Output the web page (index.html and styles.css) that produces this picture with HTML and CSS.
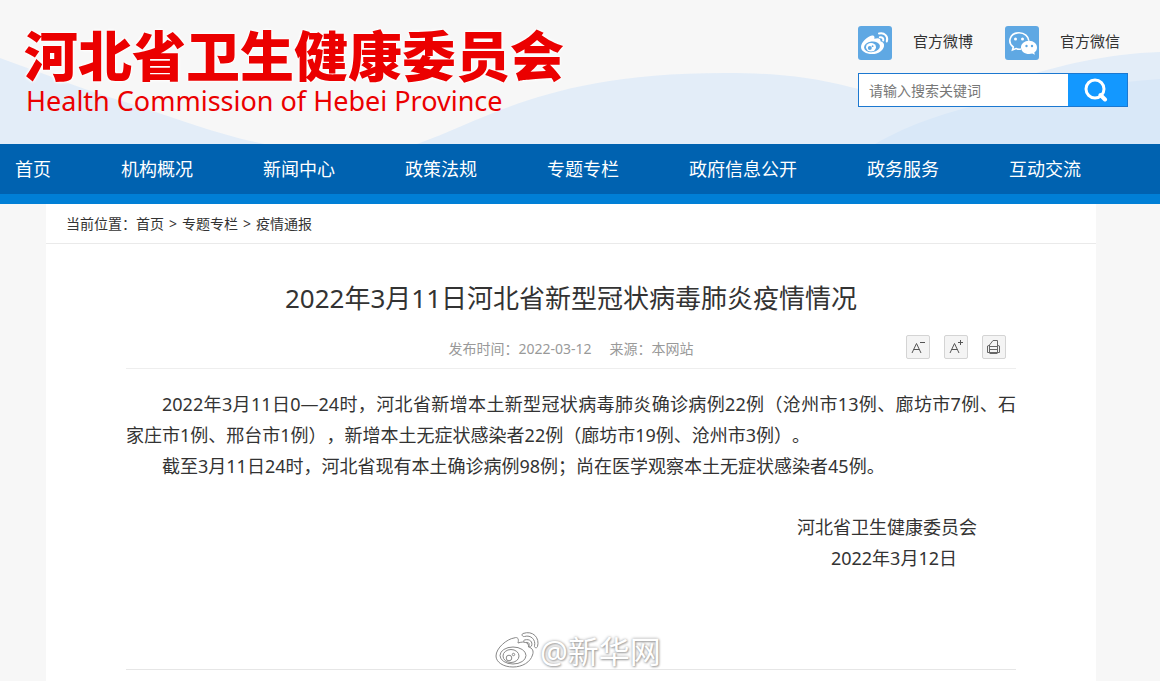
FILE: index.html
```html
<!DOCTYPE html>
<html lang="zh-CN">
<head>
  <meta charset="UTF-8">
  <meta name="viewport" content="width=device-width, initial-scale=1.0">
  <title>2022年3月11日河北省新型冠状病毒肺炎疫情情况</title>
  <link rel="stylesheet" href="styles.css">
</head>
<body>
  <header class="header">
    <svg class="waves" viewBox="0 0 1160 144" preserveAspectRatio="none" aria-hidden="true">
      <path fill="#e3edf8" d="M0 58C50 76 90 92 135 105C180 120 220 135 264 144H0Z"/>
      <path fill="#e3edf8" d="M417 144C490 118 550 73 725 73C800 73 830 82 870 92L1000 84C1050 68 1100 54 1160 52V144Z"/>
      <path fill="#d9e8f8" d="M875 144C930 112 1010 91 1160 79V144Z"/>
    </svg>
    <div class="logo">
      <div class="logo-cn">河北省卫生健康委员会</div>
      <div class="logo-en">Health Commission of Hebei Province</div>
    </div>
    <div class="tools">
      <div class="social">
        <a href="#">
          <svg width="34" height="34" viewBox="0 0 34 34" aria-hidden="true">
            <rect width="34" height="34" rx="3" fill="#5fa8e3"/>
            <path fill="#fff" d="M14 9.500c2-.5 3 .8 2.300 3.300 3.500-1.300 6.600-.8 6.200 2.400 2.600.8 4 2.300 3.500 5-.8 4-5.500 7.800-11.800 7.800C8 28 3 25.300 3 21c0-4.700 6.500-10.700 11-11.500Z"/>
            <ellipse cx="14" cy="20.800" rx="8" ry="5.300" fill="#5fa8e3" transform="rotate(-7 14 20.800)"/>
            <ellipse cx="13" cy="21.200" rx="5" ry="4.200" fill="#fff"/>
            <circle cx="11.800" cy="22" r="2" fill="#5fa8e3"/>
            <circle cx="14.600" cy="20.200" r=".9" fill="#5fa8e3"/>
            <path fill="none" stroke="#fff" stroke-width="2" stroke-linecap="round" d="M21 7.500c5.500-1.500 9.500 3 7.800 8M21.800 11.300c2.500-.5 4 1.200 3.400 3.300"/>
          </svg>
          <span>官方微博</span>
        </a>
        <a href="#">
          <svg width="34" height="34" viewBox="0 0 34 34" aria-hidden="true">
            <rect width="34" height="34" rx="3" fill="#5fa8e3"/>
            <path fill="none" stroke="#fff" stroke-width="1.600" d="M16 23c-1.500.3-3.500.2-5-.4L7.500 24l.8-3C2.500 17 4 7 14 6.800c5.500 0 9.500 3.700 9.800 8"/>
            <circle cx="10.500" cy="13" r="1.500" fill="#fff"/>
            <circle cx="17.500" cy="13" r="1.500" fill="#fff"/>
            <path fill="#fff" d="M24 14.800c4.700 0 8 3 8 6.700 0 2.200-1 3.900-2.700 5l.6 2.300-2.600-1.200c-6 1.600-11.300-1.600-11.300-6.100 0-3.700 3.500-6.700 8-6.700Z"/>
            <circle cx="21.500" cy="20" r="1.200" fill="#5fa8e3"/>
            <circle cx="27" cy="20" r="1.200" fill="#5fa8e3"/>
          </svg>
          <span>官方微信</span>
        </a>
      </div>
      <form class="search">
        <input type="text" placeholder="请输入搜索关键词" aria-label="请输入搜索关键词">
        <button type="button" aria-label="搜索">
          <svg width="24" height="24" viewBox="0 0 24 24" aria-hidden="true">
            <circle cx="11" cy="11" r="9" fill="none" stroke="#fff" stroke-width="3"/>
            <path d="M16.500 17L21 21.500" stroke="#fff" stroke-width="4" stroke-linecap="round"/>
          </svg>
        </button>
      </form>
    </div>
  </header>

  <nav class="nav">
    <a href="#">首页</a>
    <a href="#">机构概况</a>
    <a href="#">新闻中心</a>
    <a href="#">政策法规</a>
    <a href="#">专题专栏</a>
    <a href="#">政府信息公开</a>
    <a href="#">政务服务</a>
    <a href="#">互动交流</a>
  </nav>

  <main class="main">
    <div class="crumbs">当前位置：<a href="#">首页</a><span>&gt;</span><a href="#">专题专栏</a><span>&gt;</span><a href="#">疫情通报</a></div>
    <article class="article">
      <h1>2022年3月11日河北省新型冠状病毒肺炎疫情情况</h1>
      <div class="info">
        <div class="meta"><span>发布时间：2022-03-12</span><span>来源：本网站</span></div>
        <div class="actions">
          <button type="button" aria-label="缩小字号">
            <svg width="24" height="24" viewBox="0 0 24 24" fill="none" stroke="#555" aria-hidden="true">
              <path d="M6 18L10.500 8.500L15 18M7.500 14.500H13.500M14 7.500H19"/>
            </svg>
          </button>
          <button type="button" aria-label="放大字号">
            <svg width="24" height="24" viewBox="0 0 24 24" fill="none" stroke="#555" aria-hidden="true">
              <path d="M6 18L10.500 8.500L15 18M7.500 14.500H13.500M14 7.500H19M16.500 5V10"/>
            </svg>
          </button>
          <button type="button" aria-label="打印">
            <svg width="24" height="24" viewBox="0 0 24 24" fill="none" stroke="#666" aria-hidden="true">
              <path d="M7.500 17.500V10L11 5.500H15.500V17.500M7.500 11.500H15.500M7.500 14.500H15.500M7 10.500L5.500 11V17.500H17.500V11L16 10.500M7.500 18.500H15.500"/>
            </svg>
          </button>
        </div>
      </div>
      <div class="content">
        <p>2022年3月11日0—24时，河北省新增本土新型冠状病毒肺炎确诊病例22例（沧州市13例、廊坊市7例、石家庄市1例、邢台市1例），新增本土无症状感染者22例（廊坊市19例、沧州市3例）。</p>
        <p>截至3月11日24时，河北省现有本土确诊病例98例；尚在医学观察本土无症状感染者45例。</p>
        <div class="sign">
          <div>河北省卫生健康委员会</div>
          <div class="date">2022年3月12日</div>
        </div>
      </div>
    </article>
    <div class="watermark">
      <svg width="46" height="40" viewBox="0 0 46 40" fill="#fff" stroke="#888" aria-hidden="true">
        <path d="M20 7c4-1.500 5 1 4 5 6-2 11-1 10.500 4 4 1 5.500 4 4 8-2 7-10 12-19.500 12C9 36 2 31 2 25 2 17 13 8 20 7Z"/>
        <ellipse cx="19" cy="24.500" rx="13" ry="8.500"/>
        <ellipse cx="17" cy="25" rx="8" ry="6.500"/>
        <circle cx="15" cy="27" r="2.800"/>
        <circle cx="19.500" cy="23.500" r="1.200"/>
        <path d="M29 2.500C39-1 46 7 43.500 15.500c-.5 2-3.500 1.500-3-.7C42 9 37 3.500 30.500 5.500c-2 .5-3.500-2-1.500-3ZM30.500 9c5.500-1.500 8.500 2 7 6-.8 1.500-3 .8-2.500-1 .8-2-1-3-3.500-2.500-2 0-2.500-2-1-2.500Z"/>
      </svg>
      <span>@新华网</span>
    </div>
  </main>
</body>
</html>
```

FILE: styles.css
```css
* {
  box-sizing: border-box;
}
body {
  margin: 0;
  background-color: #f7f7f7;
  color: #333;
  font-family: "Noto Sans", "Noto Sans CJK SC", sans-serif;
  font-size: 14px;
  text-spacing-trim: space-all;
}
a {
  color: inherit;
  text-decoration: none;
}
.header {
  position: relative;
  display: flex;
  justify-content: space-between;
  height: 144px;
  padding: 26px 32px 0 24px;
}
.waves {
  position: absolute;
  top: 0;
  left: 0;
  width: 100%;
  height: 100%;
}
.logo {
  position: relative;
  color: #eb0000;
}
.logo-cn {
  font-family: "Noto Sans CJK SC", sans-serif;
  font-size: 54px;
  font-weight: 900;
  line-height: 56px;
  text-shadow: 0 0 3px #fff, 0 0 3px #fff, 0 0 4px #fff;
}
.logo-en {
  margin-top: 4px;
  padding-left: 2px;
  font-size: 27px;
  line-height: 30px;
}
.tools {
  position: relative;
  width: 270px;
}
.social {
  display: flex;
  gap: 32px;
}
.social a {
  display: flex;
  gap: 21px;
  font-size: 15px;
  line-height: 30px;
  white-space: nowrap;
}
.search {
  display: flex;
  height: 34px;
  margin-top: 13px;
  border: 1px solid #1c78d0;
}
.search input {
  flex: 1;
  min-width: 0;
  padding: 0 10px;
  border: none;
  font-family: inherit;
  font-size: 14px;
}
.search input::placeholder {
  color: #777;
}
.search button {
  display: flex;
  align-items: center;
  justify-content: center;
  width: 59px;
  padding: 0 4px 0 0;
  border: none;
  background-color: #1398ff;
  cursor: pointer;
}
.nav {
  display: flex;
  gap: 70px;
  padding-left: 15px;
  background-color: #0062b0;
  border-bottom: 10px solid #007fd6;
  color: #fff;
  font-size: 18px;
  line-height: 50px;
  white-space: nowrap;
}
.main {
  position: relative;
  margin: 0 64px 0 46px;
  padding-bottom: 11px;
  background-color: #fff;
}
.crumbs {
  padding-left: 20px;
  border-bottom: 1px solid #eaeaea;
  line-height: 39px;
}
.crumbs span {
  margin: 0 5px;
}
.article {
  margin: 0 80px;
  padding-top: 34px;
  border-bottom: 1px solid #e6e6e6;
}
.article h1 {
  margin: 0;
  font-size: 26px;
  font-weight: normal;
  line-height: 40px;
  text-align: center;
}
.info {
  display: grid;
  grid-template-columns: 1fr auto 1fr;
  align-items: center;
  height: 51px;
  margin-bottom: 20px;
  padding-top: 10px;
  border-bottom: 1px solid #eee;
}
.meta {
  display: flex;
  grid-column: 2;
  gap: 18px;
  color: #999;
}
.actions {
  display: flex;
  justify-content: flex-end;
  gap: 14px;
  padding: 0 10px 2px 0;
}
.actions button {
  width: 24px;
  height: 24px;
  padding: 0;
  border: 1px solid #d4d4d4;
  border-radius: 2px;
  background-color: #f4f4f4;
  cursor: pointer;
}
.actions svg {
  display: block;
  margin: -1px;
}
.content {
  min-height: 280px;
  font-size: 18px;
  line-height: 31px;
}
.content p {
  margin: 0;
  text-align: justify;
  text-indent: 36px;
}
.sign {
  margin-top: 30px;
  padding-right: 39px;
  text-align: right;
}
.date {
  padding-right: 20px;
}
.watermark {
  position: absolute;
  bottom: 10px;
  left: 448px;
  display: flex;
  align-items: center;
  color: #fff;
  font-size: 31px;
  line-height: 40px;
  text-shadow: 0 0 3px #999, 1px 1px 2px #aaa;
}
```
